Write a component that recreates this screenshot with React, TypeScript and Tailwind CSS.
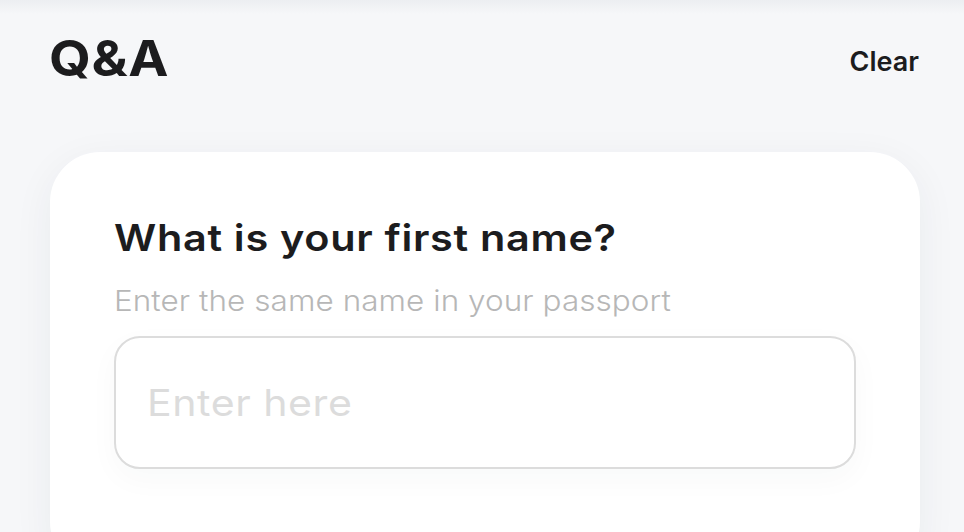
import React from "react";

export default function App() {
  return (
    <div
      className="relative h-[532px] w-[964px] overflow-hidden bg-[#f6f7f9]"
      style={{ fontFamily: "Inter, 'Noto Sans', sans-serif" }}
    >
      <div className="pointer-events-none absolute inset-x-0 top-0 h-[14px] bg-gradient-to-b from-[#eceef1] to-transparent" />
      <div className="flex items-start justify-between pl-[49px] pr-[45px] pt-[29px]">
        <h1 className="origin-left scale-x-[1.1] text-[49px] font-bold leading-[60px] tracking-[0.5px] text-[#1c1c1e]">
          Q&amp;A
        </h1>
        <button className="mt-[15px] text-[27px] font-semibold leading-[36px] text-[#1c1c1e]">
          Clear
        </button>
      </div>
      <div className="ml-[50px] mr-[44px] mt-[63px] h-[420px] rounded-[50px] bg-white px-[64px] pt-[64px] shadow-[0_10px_40px_rgba(40,50,70,0.06)]">
        <h2 className="origin-left scale-x-[1.12] whitespace-nowrap text-[37px] font-semibold leading-[44px] tracking-[0.6px] text-[#1c1c1e]">
          What is your first name?
        </h2>
        <p className="mt-[23px] origin-left scale-x-[1.085] whitespace-nowrap text-[29px] font-light leading-[36px] tracking-[0.05px] text-[#b7b7b7]">
          Enter the same name in your passport
        </p>
        <div className="mt-[17px] flex h-[133px] items-center rounded-[26px] border-2 border-[#dcdcdc] bg-white px-[31px] shadow-[0_10px_30px_rgba(40,50,70,0.03)]">
          <input
            className="w-full origin-left scale-x-[1.11] bg-transparent text-[37px] font-normal tracking-[0.5px] text-[#1c1c1e] outline-none placeholder:text-[#dcdcdc]"
            placeholder="Enter here"
          />
        </div>
      </div>
    </div>
  );
}
